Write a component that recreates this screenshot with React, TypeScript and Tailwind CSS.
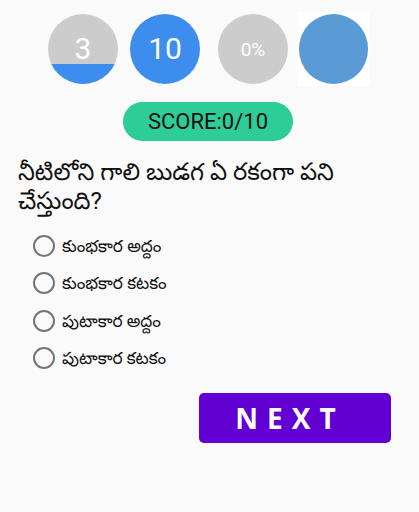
import React from "react";

const options = [
  "కుంభకార అద్దం",
  "కుంభకార కటకం",
  "పుటాకార అద్దం",
  "పుటాకార కటకం",
];

export default function App() {
  return (
    <div
      className="w-[419px] h-[512px] bg-[#fafafa] overflow-hidden"
      style={{ fontFamily: "Roboto, 'Noto Sans', 'Noto Sans Telugu', sans-serif" }}
    >
      {/* top circles */}
      <div className="flex items-center pt-[12px] pl-[48px]">
        <div className="relative w-[70px] h-[70px] rounded-full bg-[#cccccc] overflow-hidden flex items-center justify-center">
          <div className="absolute left-0 right-0 bottom-0 h-[20px] bg-[#3d8def]" />
          <span className="relative text-white text-[30px] leading-none">3</span>
        </div>
        <div className="ml-[12px] w-[70px] h-[70px] rounded-full bg-[#3d8def] flex items-center justify-center">
          <span className="text-white text-[30px] leading-none">10</span>
        </div>
        <div className="ml-[18px] w-[70px] h-[70px] rounded-full bg-[#cccccc] flex items-center justify-center">
          <span className="text-white text-[19px] leading-none">0%</span>
        </div>
        <div className="ml-[9px] w-[73px] h-[74px] bg-white flex items-center justify-center">
          <div className="w-[69px] h-[70px] rounded-full bg-[#5b9bd5]" />
        </div>
      </div>

      {/* score */}
      <div className="flex pl-[123px] mt-[16px]">
        <div className="w-[170px] h-[39px] rounded-full bg-[#2ecc97] flex items-center justify-center">
          <span className="text-[22px] text-[#111] leading-none">SCORE:0/10</span>
        </div>
      </div>

      {/* question */}
      <div className="pl-[18px] mt-[17px] text-[24px] leading-[29px] text-[#111]">
        నీటిలోని గాలి బుడగ ఏ రకంగా పని
        <br />
        చేస్తుంది?
      </div>

      {/* options */}
      <div className="flex flex-col pl-[33px] mt-[11px]">
        {options.map((o) => (
          <div key={o} className="flex items-center h-[37.5px]">
            <div className="w-[22px] h-[22px] rounded-full border-2 border-[#757575]" />
            <span className="ml-[7px] text-[17px] leading-[20px] text-[#111]">{o}</span>
          </div>
        ))}
      </div>

      {/* next */}
      <div className="flex pl-[199px] mt-[16px]">
        <button className="w-[192px] h-[50px] rounded-[5px] bg-[#6200d4] flex items-center justify-center pr-[10px]">
          <span className="text-white font-bold text-[28px] tracking-[9px] leading-none" style={{ fontFamily: "'Open Sans', sans-serif" }}>
            NEXT
          </span>
        </button>
      </div>
    </div>
  );
}
